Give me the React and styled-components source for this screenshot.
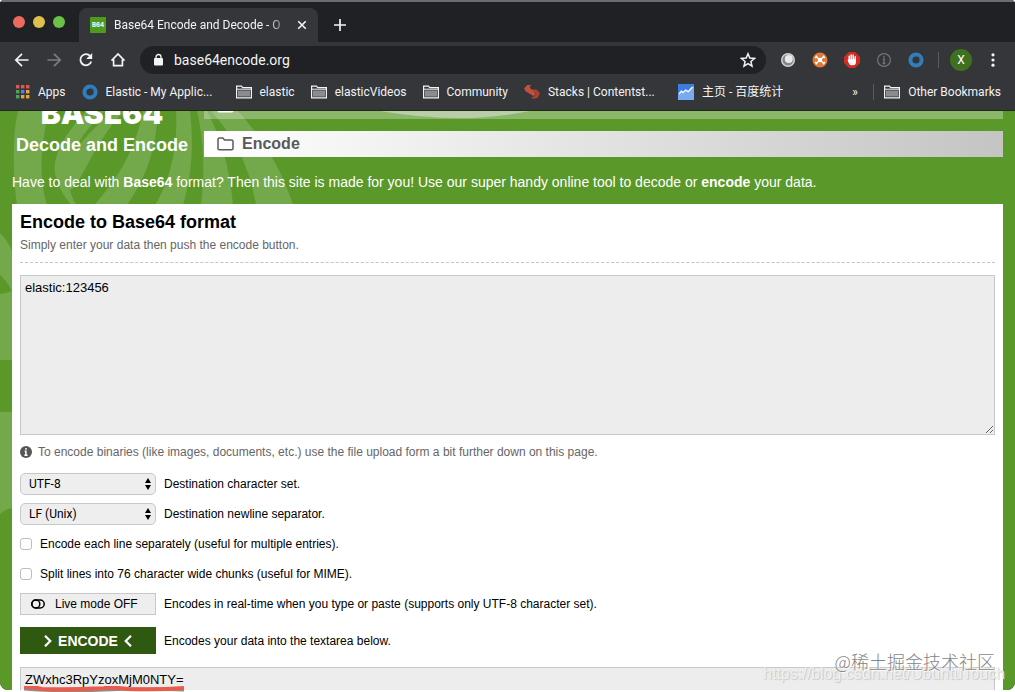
import styled, { createGlobalStyle } from 'styled-components';

const GlobalStyle = createGlobalStyle`
  *, *::before, *::after {
    box-sizing: border-box;
  }

  body {
    margin: 0;
    background: #fff;
    font-family: 'Liberation Sans', Arial, sans-serif;
  }

  button, input, select, textarea {
    font: inherit;
    margin: 0;
  }

  svg {
    display: block;
    flex: none;
  }
`;

const Desktop = styled.div`
  height: 100vh;
  padding-bottom: 2px;
  position: relative;
  overflow: hidden;
`;

const Window = styled.div`
  display: flex;
  flex-direction: column;
  height: 100%;
  overflow: hidden;
  border-radius: 4px 4px 8px 8px;
  background: #35363a;
`;

/* ---------- browser chrome ---------- */

const Chrome = styled.header`
  flex: none;
  font-family: Roboto, 'Noto Sans CJK SC', sans-serif;
  font-size: 12px;
  color: #f1f3f4;
  border-top: 2px solid #6b6d70;
  border-bottom: 1px solid #1d2b14;
`;

const TabStrip = styled.div`
  display: flex;
  align-items: flex-end;
  height: 40px;
  padding-left: 13px;
  background: #202124;
`;

const Lights = styled.div`
  display: flex;
  gap: 8px;
  align-self: center;
  width: 66px;
`;

const Light = styled.span`
  width: 12px;
  height: 12px;
  border-radius: 50%;
  background: ${(p) => p.$color};
`;

const Tab = styled.div`
  display: flex;
  align-items: center;
  gap: 8px;
  width: 239px;
  height: 34px;
  padding: 0 10px 0 11px;
  border-radius: 8px 8px 0 0;
  background: #35363a;
`;

const Favicon = styled.span`
  flex: none;
  width: 16px;
  height: 16px;
  border-radius: 1px;
  background: #4f9a1c;
  font-family: Inter, sans-serif;
  font-size: 6px;
  font-weight: 800;
  line-height: 16px;
  text-align: center;
`;

const TabTitle = styled.span`
  flex: 1;
  overflow: hidden;
  white-space: nowrap;
  mask-image: linear-gradient(90deg, #000 88%, transparent 102%);
`;

const IconButton = styled.button`
  display: flex;
  align-items: center;
  justify-content: center;
  flex: none;
  width: ${(p) => p.$size || 32}px;
  height: ${(p) => p.$height || 28}px;
  padding: 0;
  border: 0;
  background: none;
  color: ${(p) => (p.$dim ? '#7c7e82' : '#f1f3f4')};
`;

const Toolbar = styled.div`
  display: flex;
  align-items: center;
  height: 36px;
  padding: 0 6px;
`;

const AddressBar = styled.div`
  display: flex;
  align-items: center;
  flex: 1;
  gap: 10px;
  height: 28px;
  margin: 0 6px;
  padding-left: 13px;
  border-radius: 14px;
  background: #202124;
`;

const Address = styled.input`
  flex: 1;
  min-width: 0;
  padding: 0;
  border: 0;
  outline: 0;
  background: none;
  color: #f1f3f4;
  font-size: 14px;
`;

const Divider = styled.span`
  width: 1px;
  height: 16px;
  margin: 0 ${(p) => p.$space || 6}px;
  background: #5a5c60;
`;

const Avatar = styled.button`
  width: 22px;
  height: 22px;
  margin: 0 5px;
  padding: 0;
  border: 0;
  border-radius: 50%;
  background: #40701f;
  color: #fff;
  font-size: 12px;
`;

const Bookmarks = styled.nav`
  display: flex;
  align-items: center;
  gap: 16px;
  height: 32px;
  padding: 0 14px 5px 15px;
`;

const Bookmark = styled.a`
  display: flex;
  align-items: center;
  gap: 8px;
  min-width: ${(p) => p.$min || 0}px;
  color: inherit;
  line-height: 16px;
  text-decoration: none;
  white-space: nowrap;
`;

const BookmarksEnd = styled.div`
  display: flex;
  align-items: center;
  margin-left: auto;
`;

/* ---------- site ---------- */

const Page = styled.main`
  position: relative;
  flex: 1;
  min-height: 0;
  overflow: hidden;
  padding: 0 12px;
  background: #5a982a;
`;

const Pattern = styled.svg`
  position: absolute;
  top: 0;
  left: 0;
`;

const SiteHeader = styled.div`
  position: relative;
  display: flex;
  height: 46px;
  color: #fff;
`;

const Brand = styled.div`
  display: flex;
  flex-direction: column;
  justify-content: flex-end;
  flex: none;
  width: 192px;
  padding-right: 12px;
  text-align: center;
`;

const BrandName = styled.strong`
  font-family: Inter, sans-serif;
  font-size: 30px;
  font-weight: 900;
  line-height: 40px;
`;

const Tagline = styled.strong`
  font-size: 18px;
  line-height: 24px;
`;

const SiteNav = styled.nav`
  display: flex;
  flex-direction: column;
  justify-content: flex-end;
  flex: 1;
  gap: 12px;
`;

const NavLink = styled.a`
  display: flex;
  align-items: center;
  flex: none;
  gap: 8px;
  height: 26px;
  padding-left: 13px;
  font-size: 16px;
  font-weight: bold;
  text-decoration: none;
  color: ${(p) => (p.$active ? '#5a5a5a' : '#fff')};
  background: ${(p) =>
    p.$active ? 'linear-gradient(90deg, #fff, #e2e2e2 50%, #c4c4c4)' : 'rgba(255, 255, 255, 0.3)'};
`;

const Intro = styled.p`
  position: relative;
  margin: 15px 0 12px;
  color: #fff;
  font-size: 14px;
  line-height: 20px;
`;

const Card = styled.section`
  position: relative;
  height: 100%;
  padding: 6px 8px;
  background: #fff;
  color: #000;
  font-size: 12px;
`;

const Title = styled.h1`
  margin: 0;
  font-size: 18px;
  line-height: 24px;
`;

const Subtitle = styled.p`
  margin: 3px 0 12px;
  padding-bottom: 9px;
  border-bottom: 1px dashed #c4c4c4;
  color: #666;
  line-height: 16px;
`;

const TextArea = styled.textarea`
  display: block;
  width: 100%;
  height: 160px;
  padding: 4px;
  border: 1px solid #c8c8c8;
  outline: 0;
  background: #ededed;
  color: #000;
  font-size: 13px;
  line-height: 16px;
  resize: vertical;
`;

const Hint = styled.p`
  display: flex;
  align-items: center;
  gap: 6px;
  margin: 9px 0 13px;
  color: #666;
  line-height: 16px;
`;

const Options = styled.div`
  display: flex;
  flex-direction: column;
  gap: 8px;
`;

const Row = styled.div`
  display: flex;
  align-items: center;
  gap: 8px;
  min-height: 22px;
`;

const SelectBox = styled.div`
  position: relative;
  width: 136px;

  svg {
    position: absolute;
    top: 5px;
    right: 4px;
    pointer-events: none;
  }
`;

const Select = styled.select`
  display: block;
  appearance: none;
  width: 100%;
  height: 22px;
  padding: 0 8px;
  border: 1px solid #c8c8c8;
  border-radius: 5px;
  background: #eee;
  color: #000;
  font-family: Roboto, sans-serif;
  font-size: 12px;
`;

const Checkbox = styled.input`
  appearance: none;
  width: 12px;
  height: 12px;
  border: 1px solid #bdbdbd;
  border-radius: 3px;
  background: #fff;
`;

const LiveButton = styled.button`
  display: flex;
  align-items: center;
  gap: 10px;
  width: 136px;
  height: 22px;
  padding: 0 10px;
  border: 1px solid #c8c8c8;
  background: #eee;
  color: #000;
`;

const EncodeButton = styled.button`
  display: flex;
  align-items: center;
  justify-content: center;
  gap: 4px;
  width: 136px;
  height: 27px;
  padding: 0;
  border: 0;
  background: #2f5910;
  color: #fff;
  font-size: 14px;
  font-weight: bold;
`;

const EncodeRow = styled(Row)`
  margin: 12px 0 13px;
`;

const Underline = styled.svg`
  position: absolute;
  left: 24px;
  bottom: 0;
`;

const Watermark = styled.div`
  position: absolute;
  right: ${(p) => p.$right}px;
  bottom: ${(p) => p.$bottom}px;
  color: ${(p) => p.$color};
  font-family: ${(p) => p.$font}, sans-serif;
  font-size: ${(p) => p.$size}px;
  font-weight: 300;
  line-height: 24px;
  white-space: nowrap;
  text-shadow: 0 0 1px ${(p) => p.$glow}, 1px 1px 1px ${(p) => p.$glow};
  pointer-events: none;
`;

const FolderIcon = () => (
  <svg width="16" height="14" viewBox="0 0 16 14">
    <path d="M.6 12.9V1.1h4.8l1.4 1.6h8.6v10.2z" fill="none" stroke="#f1f3f4" strokeWidth="1.2" />
    <path d="M2 5.4h12v6.2H2z" fill="#8b8c8e" />
    <path d="M1 4.2h14" stroke="#f1f3f4" />
  </svg>
);

const RingIcon = () => (
  <svg width="16" height="16" viewBox="0 0 16 16">
    <circle cx="8" cy="8" r="5.6" fill="none" stroke="#327dbb" strokeWidth="4" />
    <path d="M8 3.8a4.2 4.2 0 0 1 4.2 4.2" fill="none" stroke="#276395" />
  </svg>
);

const appColors = ['#e2574c', '#e2574c', '#e2574c', '#4fa35c', '#4a86e8', '#e5a83b', '#4fa35c', '#e5a83b', '#e5a83b'];

const AppsIcon = () => (
  <svg width="15" height="15" viewBox="0 0 15 15">
    {appColors.map((color, i) => (
      <rect key={i} x={1 + (i % 3) * 5} y={1 + Math.floor(i / 3) * 5} width="3.4" height="3.4" fill={color} />
    ))}
  </svg>
);

const StackIcon = () => (
  <svg width="16" height="14" viewBox="0 0 16 14">
    <path d="M3.2 0H7L5.6 2.6l2.2 2.2h4L10 7.4l1.6 2L9.4 11 1.6 6.2 0 3.6z" fill="#c2503a" />
    <path d="M8 4.8h5.2L16 8.6l-2.4 4.2L9.4 14l-2.2-1.6 3.4-1.4L11.8 9z" fill="#a9432f" />
  </svg>
);

const ChartIcon = () => (
  <svg width="16" height="16" viewBox="0 0 16 16">
    <rect width="16" height="16" fill="#3d7de2" />
    <path d="M0 11 3 7.6 5 9l3-3.4 2.4 2 3-4.2L16 2v14H0z" fill="#79a9f1" />
    <path d="m1 10 2.5-3L5 8.6 7.6 6l2.6 1.6L14.6 3" fill="none" stroke="#fff" strokeWidth="1.3" />
  </svg>
);

const Stroke = ({ d, size = 16, width = 1.7 }) => (
  <svg width={size} height={size} viewBox="0 0 16 16" fill="none" stroke="currentColor" strokeWidth={width}>
    <path d={d} />
  </svg>
);

const BrowserChrome = () => (
  <Chrome>
    <TabStrip>
      <Lights>
        <Light $color="#ed6a5e" />
        <Light $color="#e0c04c" />
        <Light $color="#6cbf47" />
      </Lights>
      <Tab>
        <Favicon>B64</Favicon>
        <TabTitle>Base64 Encode and Decode - O</TabTitle>
        <IconButton $size={12} aria-label="Close tab">
          <Stroke size={12} width={2.2} d="m3 3 10 10M13 3 3 13" />
        </IconButton>
      </Tab>
      <IconButton $size={44} $height={34} aria-label="New tab">
        <Stroke d="M8 2v12M2 8h12" />
      </IconButton>
    </TabStrip>
    <Toolbar>
      <IconButton aria-label="Back">
        <Stroke d="M14.5 8H2M8 1.8 1.8 8 8 14.2" />
      </IconButton>
      <IconButton $dim aria-label="Forward">
        <Stroke d="M1.5 8H14M8 1.8 14.2 8 8 14.2" />
      </IconButton>
      <IconButton aria-label="Reload">
        <svg width="16" height="16" viewBox="0 0 16 16">
          <path d="M13.3 9.5A5.6 5.6 0 1 1 12.2 4" fill="none" stroke="currentColor" strokeWidth="1.8" />
          <path d="M14.2 1v6h-6z" fill="currentColor" />
        </svg>
      </IconButton>
      <IconButton aria-label="Home">
        <Stroke d="M1.5 8.6 8 2l6.5 6.6M3.6 7.5v6.2h8.8V7.5" />
      </IconButton>
      <AddressBar>
        <svg width="11" height="14" viewBox="0 0 11 14">
          <rect x="1" y="5" width="9" height="7.6" rx="1" fill="#f1f3f4" />
          <path d="M3 5.5V4a2.5 2.5 0 0 1 5 0v1.5" fill="none" stroke="#f1f3f4" strokeWidth="1.3" />
        </svg>
        <Address aria-label="Address" defaultValue="base64encode.org" />
        <IconButton $size={36} aria-label="Bookmark this page">
          <Stroke width={1.5} d="m8 1.8 1.8 4.3 4.7.4-3.6 3 1.1 4.6-4-2.5-4 2.5 1.1-4.6-3.6-3 4.7-.4z" />
        </IconButton>
      </AddressBar>
      <IconButton aria-label="Globe extension">
        <svg width="16" height="16" viewBox="0 0 16 16">
          <circle cx="8" cy="8" r="6.3" fill="#85878a" stroke="#d2d3d4" strokeWidth="1.4" />
          <circle cx="8.8" cy="7" r="4" fill="#e9e9e9" />
        </svg>
      </IconButton>
      <IconButton aria-label="Network extension">
        <svg width="16" height="16" viewBox="0 0 16 16">
          <circle cx="8" cy="8" r="7.5" fill="#e07a38" />
          <path d="m4.5 5 7 6M11.5 5l-7 6" stroke="#fff" strokeWidth="1.3" />
          <circle cx="8" cy="8" r="2.2" fill="#fff" />
          <path d="M3.2 6 5 3.8M11 3.8 12.8 6M3.2 10 5 12.2M11 12.2l1.8-2.2" stroke="#fff" strokeWidth="1.5" />
        </svg>
      </IconButton>
      <IconButton aria-label="Blocker extension">
        <svg width="16" height="16" viewBox="0 0 16 16">
          <path d="M5 0h6l5 5v6l-5 5H5l-5-5V5z" fill="#d22d25" />
          <path d="M5.2 8.6V4.2M7.2 8V2.9M9.2 8V3.2M11.2 9V4.8" stroke="#fff" strokeWidth="1.5" strokeLinecap="round" />
          <path d="M4.5 7.2h7.4v3.2c0 1.5-1 2.8-2.6 2.8H7.6c-1.4 0-2.2-.9-2.7-2L3.6 8.6z" fill="#fff" />
        </svg>
      </IconButton>
      <IconButton $dim aria-label="Information extension">
        <svg width="16" height="16" viewBox="0 0 16 16" fill="none" stroke="#717377" strokeWidth="1.2">
          <circle cx="8" cy="8" r="6.4" />
          <path d="M8 4v1.6M6.8 7H8v4.4M6.6 11.5h2.8" strokeWidth="1.5" />
        </svg>
      </IconButton>
      <IconButton aria-label="Elastic extension">
        <RingIcon />
      </IconButton>
      <Divider />
      <Avatar aria-label="Profile">X</Avatar>
      <IconButton aria-label="Menu">
        <svg width="16" height="16" viewBox="0 0 16 16" fill="currentColor">
          <circle cx="8" cy="2.8" r="1.6" />
          <circle cx="8" cy="8" r="1.6" />
          <circle cx="8" cy="13.2" r="1.6" />
        </svg>
      </IconButton>
    </Toolbar>
    <Bookmarks>
      <Bookmark href="#apps"><AppsIcon />Apps</Bookmark>
      <Bookmark href="#elastic-app" $min={138}><RingIcon />Elastic - My Applic...</Bookmark>
      <Bookmark href="#elastic"><FolderIcon />elastic</Bookmark>
      <Bookmark href="#videos"><FolderIcon />elasticVideos</Bookmark>
      <Bookmark href="#community"><FolderIcon />Community</Bookmark>
      <Bookmark href="#stacks" $min={138}><StackIcon />Stacks | Contentst...</Bookmark>
      <Bookmark href="#baidu"><ChartIcon />主页 - 百度统计</Bookmark>
      <BookmarksEnd>
        <IconButton $size={16} aria-label="More bookmarks">»</IconButton>
        <Divider $space={10} />
        <Bookmark href="#other"><FolderIcon />Other Bookmarks</Bookmark>
      </BookmarksEnd>
    </Bookmarks>
  </Chrome>
);

const NavFolder = () => (
  <svg width="17" height="14" viewBox="0 0 17 14">
    <path
      d="M1 11.5v-9Q1 1 2.5 1h3.3l1.8 2h6.9Q16 3 16 4.5v7q0 1.3-1.5 1.3h-12Q1 12.8 1 11.5z"
      fill="none"
      stroke="currentColor"
      strokeWidth="1.5"
    />
  </svg>
);

const SelectField = ({ id, label, value }) => (
  <Row>
    <SelectBox>
      <Select id={id} defaultValue={value}>
        <option>{value}</option>
      </Select>
      <svg width="8" height="12" viewBox="0 0 8 12">
        <path d="M4 0 7 5H1zM4 12 1 7h6z" />
      </svg>
    </SelectBox>
    <label htmlFor={id}>{label}</label>
  </Row>
);

const CheckField = ({ id, label }) => (
  <Row>
    <Checkbox type="checkbox" id={id} />
    <label htmlFor={id}>{label}</label>
  </Row>
);

const App = () => {
  return (
    <Desktop>
      <GlobalStyle />
      <Window>
        <BrowserChrome />
        <Page>
          <Pattern width="540" height="580" viewBox="0 0 540 580" fill="#73a84b" aria-hidden="true">
            <path d="M18 0C12 25 13 65 17 94h30C40 70 39 40 49 0z" />
            <path d="M86 0C66 22 50 46 56 66c3 12 9 20 15 28h5C61 66 68 34 105 0z" />
            <path d="M112 0C86 26 61 48 62 70c1 10 9 12 14 4C88 55 100 25 124 0z" />
            <path d="M143 0c-6 30-18 60-49 94h33c21-30 29-58 31-94z" />
            <path d="M176 0c2 36-6 70-21 94h28c9-30 11-60 7-94z" />
            <path d="M197 0c7 30 8 62 4 94h32c-3-36-12-68-26-94z" />
            <path d="M211 0c23 25 39 56 45 94h37c-10-32-28-64-55-94z" />
            <path d="M0 122q8 8 12 18v40Q7 170 0 164zM0 183q7-1 12-3v69H0zM0 301h12v96q-6 1-12 6z" />
            <path d="M380 0q80 14 150 0z" fill="#9bb983" />
          </Pattern>
          <SiteHeader>
            <Brand>
              <BrandName>BASE64</BrandName>
              <Tagline>Decode and Encode</Tagline>
            </Brand>
            <SiteNav>
              <NavLink href="#decode" aria-label="Decode"><NavFolder /></NavLink>
              <NavLink href="#encode" $active><NavFolder />Encode</NavLink>
            </SiteNav>
          </SiteHeader>
          <Intro>
            Have to deal with <strong>Base64</strong> format? Then this site is made for you! Use our
            super handy online tool to decode or <strong>encode</strong> your data.
          </Intro>
          <Card>
            <Title>Encode to Base64 format</Title>
            <Subtitle>Simply enter your data then push the encode button.</Subtitle>
            <TextArea aria-label="Data to encode" defaultValue="elastic:123456" spellCheck={false} />
            <Hint>
              <svg width="12" height="12" viewBox="0 0 12 12">
                <circle cx="6" cy="6" r="6" fill="#555" />
                <path d="M6 2v1.8M4.7 5.2h1.2v3.9M4.4 9.2h3.2" fill="none" stroke="#fff" strokeWidth="1.5" />
              </svg>
              To encode binaries (like images, documents, etc.) use the file upload form a bit further
              down on this page.
            </Hint>
            <Options>
              <SelectField id="charset" value="UTF-8" label="Destination character set." />
              <SelectField id="newline" value="LF (Unix)" label="Destination newline separator." />
              <CheckField id="lines" label="Encode each line separately (useful for multiple entries)." />
              <CheckField id="chunks" label="Split lines into 76 character wide chunks (useful for MIME)." />
              <Row>
                <LiveButton id="live">
                  <svg width="14" height="10" viewBox="0 0 14 10" fill="none" stroke="#000" strokeWidth="1.5">
                    <rect x=".8" y="1" width="12.4" height="8" rx="4" />
                    <circle cx="4.8" cy="5" r="4" />
                  </svg>
                  Live mode OFF
                </LiveButton>
                <label htmlFor="live">
                  Encodes in real-time when you type or paste (supports only UTF-8 character set).
                </label>
              </Row>
            </Options>
            <EncodeRow>
              <EncodeButton id="encode">
                <Stroke size={12} width={3} d="m4 1 7 7-7 7" />
                ENCODE
                <Stroke size={12} width={3} d="m12 1-7 7 7 7" />
              </EncodeButton>
              <label htmlFor="encode">Encodes your data into the textarea below.</label>
            </EncodeRow>
            <TextArea aria-label="Encoded data" readOnly value="ZWxhc3RpYzoxMjM0NTY=" />
          </Card>
        </Page>
      </Window>
      <Underline width="162" height="6" viewBox="0 0 162 6" aria-hidden="true">
        <path d="M0 3q40 3 80 1t80 0" fill="none" stroke="#8d8d8d" strokeWidth="3" />
        <path d="M0 1q10 0 18 2 30 1 62-1 10-1 24 1 30 1 56-1" fill="none" stroke="#eb5b4c" strokeWidth="4" />
      </Underline>
      <Watermark $right={10} $bottom={6} $size={16} $color="rgba(255, 255, 255, 0.8)" $glow="rgba(160, 160, 160, 0.45)" $font="'Liberation Sans'">
        https://blog.csdn.net/UbuntuTouch
      </Watermark>
      <Watermark $right={20} $bottom={19} $size={18} $color="#858585" $glow="#fff" $font="'Noto Sans CJK SC'">
        @稀土掘金技术社区
      </Watermark>
    </Desktop>
  );
};

export default App;
